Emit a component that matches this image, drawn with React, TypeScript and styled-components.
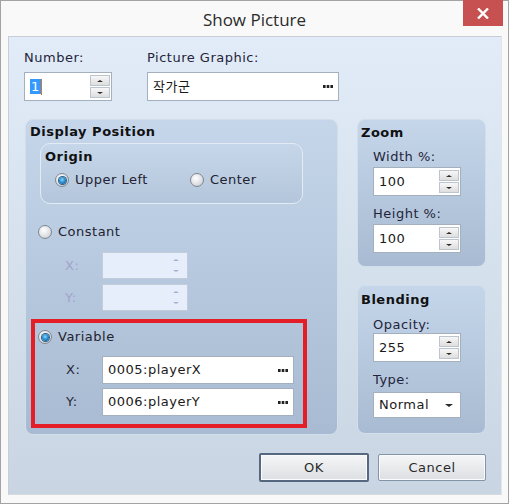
import React from "react";
import styled, { createGlobalStyle } from "styled-components";

const GlobalStyle = createGlobalStyle`
  html, body {
    margin: 0;
    padding: 0;
    background: #ffffff;
  }
  body {
    font-family: "DejaVu Sans", Verdana, sans-serif;
    font-size: 13px;
    letter-spacing: 0.5px;
    color: #1e1e28;
  }
  * {
    box-sizing: border-box;
  }
`;

const Window = styled.div`
  width: 509px;
  height: 504px;
  border: 1px solid #a3a3a3;
  background: #f9f9f9;
  display: flex;
  flex-direction: column;
`;

const TitleBar = styled.div`
  height: 35px;
  flex: none;
  display: grid;
  grid-template-columns: 1fr auto 1fr;
`;

const Title = styled.div`
  grid-column: 2;
  font-family: "Open Sans", "Noto Sans", sans-serif;
  font-size: 17px;
  letter-spacing: 0;
  line-height: 20px;
  padding-top: 9px;
  color: #2b2b2b;
`;

const CloseButton = styled.div`
  grid-column: 3;
  justify-self: end;
  width: 40px;
  height: 26px;
  margin-top: -1px;
  margin-right: 5px;
  background: #c75050;
  display: flex;
  align-items: center;
  justify-content: center;
`;

const Client = styled.div`
  flex: 1;
  margin: 0 6px 8px 7px;
  border: 1px solid #c9ced4;
  border-right-color: #e2e6ea;
  border-bottom-color: #d6dbe0;
  background: linear-gradient(#e1ecf8, #c9d5e2);
  padding: 13px 15px 12px 15px;
  display: flex;
  flex-direction: column;
`;

const TopRow = styled.div`
  display: flex;
  gap: 35px;
`;

const Field = styled.div`
  display: flex;
  flex-direction: column;
`;

const Label = styled.div<{ $top?: number; $left?: number; $disabled?: boolean }>`
  line-height: 16px;
  margin-top: ${(p) => p.$top ?? 0}px;
  margin-left: ${(p) => p.$left ?? 0}px;
  color: ${(p) => (p.$disabled ? "#a3a3cc" : "#24243a")};
`;

const Box = styled.div<{ $w: number; $h: number; $top?: number; $disabled?: boolean }>`
  width: ${(p) => p.$w}px;
  height: ${(p) => p.$h}px;
  margin-top: ${(p) => p.$top ?? 0}px;
  border: 1px solid ${(p) => (p.$disabled ? "#c3cdd9" : "#a5b0be")};
  background: ${(p) => (p.$disabled ? "#e5eefa" : "#ffffff")};
  display: flex;
  align-items: center;
  padding-left: 5px;
  color: #1a1a1a;
  flex: none;
`;

const BoxText = styled.div`
  flex: 1;
  line-height: 16px;
  white-space: nowrap;
  font-family: "DejaVu Sans", "Noto Sans CJK KR", sans-serif;
`;

const Selected = styled.span`
  background: #3399ff;
  color: #ffffff;
  padding: 0 1px;
`;

const Caret = styled.span`
  display: inline-block;
  width: 1px;
  height: 16px;
  vertical-align: top;
  background: #e0731f;
`;

const Spinner = styled.div`
  align-self: stretch;
  display: flex;
  flex-direction: column;
  gap: 1px;
  padding: 2px 1px 2px 0;
`;

const SpinButton = styled.div<{ $disabled?: boolean }>`
  width: 20px;
  flex: 1;
  display: flex;
  align-items: center;
  justify-content: center;
  border: 1px solid ${(p) => (p.$disabled ? "transparent" : "#bcc4ce")};
  background: ${(p) =>
    p.$disabled ? "transparent" : "linear-gradient(#f7f7f7, #dedede)"};
`;

const Arrow = styled.span<{ $down?: boolean; $disabled?: boolean; $size?: number }>`
  width: 0;
  height: 0;
  border-left: ${(p) => p.$size ?? 3}px solid transparent;
  border-right: ${(p) => p.$size ?? 3}px solid transparent;
  ${(p) => (p.$down ? "border-top" : "border-bottom")}: ${(p) =>
      Math.round((p.$size ?? 3) * 0.7)}px solid
    ${(p) => (p.$disabled ? "#a8aed0" : "#2a2a2a")};
`;

const Dots = styled.svg`
  margin-right: 5px;
  flex: none;
`;

const MainRow = styled.div`
  display: flex;
  gap: 19px;
  margin-top: 18px;
  padding-left: 1px;
`;

const Group = styled.div<{ $w: number; $h: number }>`
  width: ${(p) => p.$w}px;
  height: ${(p) => p.$h}px;
  border: 1px solid #d2deea;
  border-radius: 8px;
  background: linear-gradient(#c5d6ea, #a8bbd2);
  display: flex;
  flex-direction: column;
  align-items: flex-start;
`;

const GroupTitle = styled.div<{ $top: number; $left: number }>`
  font-weight: bold;
  line-height: 16px;
  color: #111111;
  margin-top: ${(p) => p.$top}px;
  margin-left: ${(p) => p.$left}px;
`;

const SubGroup = styled.div`
  width: 263px;
  height: 61px;
  margin: 3px 0 0 14px;
  border: 1px solid #e3ecf6;
  border-radius: 10px;
  background: linear-gradient(rgba(255, 255, 255, 0.06), rgba(60, 80, 110, 0.07));
  padding: 5px 0 0 4px;
`;

const OptionRow = styled.div<{ $top: number; $left: number; $gap?: number }>`
  display: flex;
  align-items: center;
  gap: ${(p) => p.$gap ?? 0}px;
  margin-top: ${(p) => p.$top}px;
  margin-left: ${(p) => p.$left}px;
  height: 16px;
`;

const Radio = styled.label`
  display: flex;
  align-items: center;
  gap: 6px;
  line-height: 16px;
  color: #222230;
`;

const RadioCircle = styled.span<{ $checked?: boolean }>`
  width: 14px;
  height: 14px;
  border-radius: 50%;
  border: 1px solid #7f8793;
  background: radial-gradient(circle at 40% 35%, #ffffff, #dcdee1 60%, #b6babf);
  display: flex;
  align-items: center;
  justify-content: center;
  &::after {
    content: "";
    display: ${(p) => (p.$checked ? "block" : "none")};
    width: 7px;
    height: 7px;
    border-radius: 50%;
    background: radial-gradient(circle at 45% 40%, #8ad6ff, #1d83c6 55%, #0c4f82);
    box-shadow: 0 0 0 1px #2e5d86;
  }
`;

const CoordRow = styled.div<{ $top: number; $left: number }>`
  display: flex;
  align-items: center;
  margin-top: ${(p) => p.$top}px;
  margin-left: ${(p) => p.$left}px;
`;

const CoordLabel = styled.div<{ $w: number; $disabled?: boolean }>`
  width: ${(p) => p.$w}px;
  line-height: 16px;
  color: ${(p) => (p.$disabled ? "#a3a3cc" : "#2a2a3a")};
`;

const Highlight = styled.div`
  width: 276px;
  height: 109px;
  margin: 8px 0 0 5px;
  border: 4px solid #e41e26;
  padding-top: 6px;
`;

const RightColumn = styled.div`
  display: flex;
  flex-direction: column;
  gap: 18px;
`;

const ButtonRow = styled.div`
  display: flex;
  justify-content: flex-end;
  align-items: center;
  gap: 9px;
  margin-top: 18px;
`;

const Button = styled.button<{ $default?: boolean; $w: number }>`
  width: ${(p) => p.$w}px;
  height: ${(p) => (p.$default ? 29 : 27)}px;
  font-family: "DejaVu Sans", Verdana, sans-serif;
  font-size: 13px;
  letter-spacing: 0.5px;
  color: #2a2a2a;
  border: ${(p) => (p.$default ? "2px solid #56687f" : "1px solid #8494a8")};
  border-radius: 2px;
  background: linear-gradient(#f5f6f7, #dcdfe3);
  box-shadow: inset 0 0 0 1px #fbfbfc;
  padding: 0;
`;

const Ellipsis = () => (
  <Dots width="10" height="3" viewBox="0 0 10 3">
    <rect x="0" y="0" width="2.6" height="3" fill="#222" />
    <rect x="3.7" y="0" width="2.6" height="3" fill="#222" />
    <rect x="7.4" y="0" width="2.6" height="3" fill="#222" />
  </Dots>
);

type SpinProps = {
  w: number;
  h: number;
  top?: number;
  disabled?: boolean;
  children?: React.ReactNode;
};

const SpinBox = ({ w, h, top, disabled, children }: SpinProps) => (
  <Box $w={w} $h={h} $top={top} $disabled={disabled}>
    <BoxText>{children}</BoxText>
    <Spinner>
      <SpinButton $disabled={disabled}>
        <Arrow $disabled={disabled} />
      </SpinButton>
      <SpinButton $disabled={disabled}>
        <Arrow $down $disabled={disabled} />
      </SpinButton>
    </Spinner>
  </Box>
);

const PickBox = ({ w, h, top, children }: SpinProps) => (
  <Box $w={w} $h={h} $top={top}>
    <BoxText>{children}</BoxText>
    <Ellipsis />
  </Box>
);

export default function App() {
  return (
    <>
      <GlobalStyle />
      <Window>
        <TitleBar>
          <Title>Show Picture</Title>
          <CloseButton>
            <svg width="12" height="11" viewBox="0 0 12 11">
              <path d="M1 0.5 L11 10.5 M11 0.5 L1 10.5" stroke="#fff" strokeWidth="2.4" />
            </svg>
          </CloseButton>
        </TitleBar>

        <Client>
          <TopRow>
            <Field>
              <Label>Number:</Label>
              <SpinBox w={88} h={29} top={6}>
                <Selected>1</Selected>
                <Caret />
              </SpinBox>
            </Field>
            <Field>
              <Label>Picture Graphic:</Label>
              <PickBox w={192} h={29} top={6}>
                작가군
              </PickBox>
            </Field>
          </TopRow>

          <MainRow>
            <Group $w={313} $h={316}>
              <GroupTitle $top={4} $left={4}>
                Display Position
              </GroupTitle>
              <SubGroup>
                <GroupTitle $top={0} $left={0}>
                  Origin
                </GroupTitle>
                <OptionRow $top={7} $left={10} $gap={42}>
                  <Radio>
                    <RadioCircle $checked />
                    Upper Left
                  </Radio>
                  <Radio>
                    <RadioCircle />
                    Center
                  </Radio>
                </OptionRow>
              </SubGroup>

              <OptionRow $top={20} $left={12}>
                <Radio>
                  <RadioCircle />
                  Constant
                </Radio>
              </OptionRow>
              <CoordRow $top={12} $left={39}>
                <CoordLabel $w={37} $disabled>
                  X:
                </CoordLabel>
                <SpinBox w={86} h={27} disabled />
              </CoordRow>
              <CoordRow $top={5} $left={39}>
                <CoordLabel $w={37} $disabled>
                  Y:
                </CoordLabel>
                <SpinBox w={86} h={27} disabled />
              </CoordRow>

              <Highlight>
                <OptionRow $top={0} $left={3}>
                  <Radio>
                    <RadioCircle $checked />
                    Variable
                  </Radio>
                </OptionRow>
                <CoordRow $top={11} $left={31}>
                  <CoordLabel $w={36}>X:</CoordLabel>
                  <PickBox w={192} h={28}>
                    0005:playerX
                  </PickBox>
                </CoordRow>
                <CoordRow $top={4} $left={31}>
                  <CoordLabel $w={36}>Y:</CoordLabel>
                  <PickBox w={192} h={28}>
                    0006:playerY
                  </PickBox>
                </CoordRow>
              </Highlight>
            </Group>

            <RightColumn>
              <Group $w={129} $h={148}>
                <GroupTitle $top={5} $left={3}>
                  Zoom
                </GroupTitle>
                <Label $top={8} $left={15}>
                  Width %:
                </Label>
                <Field style={{ marginLeft: 15 }}>
                  <SpinBox w={88} h={29} top={2}>
                    100
                  </SpinBox>
                </Field>
                <Label $top={10} $left={15}>
                  Height %:
                </Label>
                <Field style={{ marginLeft: 15 }}>
                  <SpinBox w={88} h={29} top={2}>
                    100
                  </SpinBox>
                </Field>
              </Group>

              <Group $w={129} $h={149}>
                <GroupTitle $top={6} $left={3}>
                  Blending
                </GroupTitle>
                <Label $top={9} $left={15}>
                  Opacity:
                </Label>
                <Field style={{ marginLeft: 15 }}>
                  <SpinBox w={88} h={29}>
                    255
                  </SpinBox>
                </Field>
                <Label $top={10} $left={15}>
                  Type:
                </Label>
                <Field style={{ marginLeft: 15 }}>
                  <Box $w={88} $h={26} $top={4}>
                    <BoxText>Normal</BoxText>
                    <Arrow $down $size={4} style={{ marginRight: 7 }} />
                  </Box>
                </Field>
              </Group>
            </RightColumn>
          </MainRow>

          <ButtonRow>
            <Button $default $w={110}>
              OK
            </Button>
            <Button $w={108}>Cancel</Button>
          </ButtonRow>
        </Client>
      </Window>
    </>
  );
}
